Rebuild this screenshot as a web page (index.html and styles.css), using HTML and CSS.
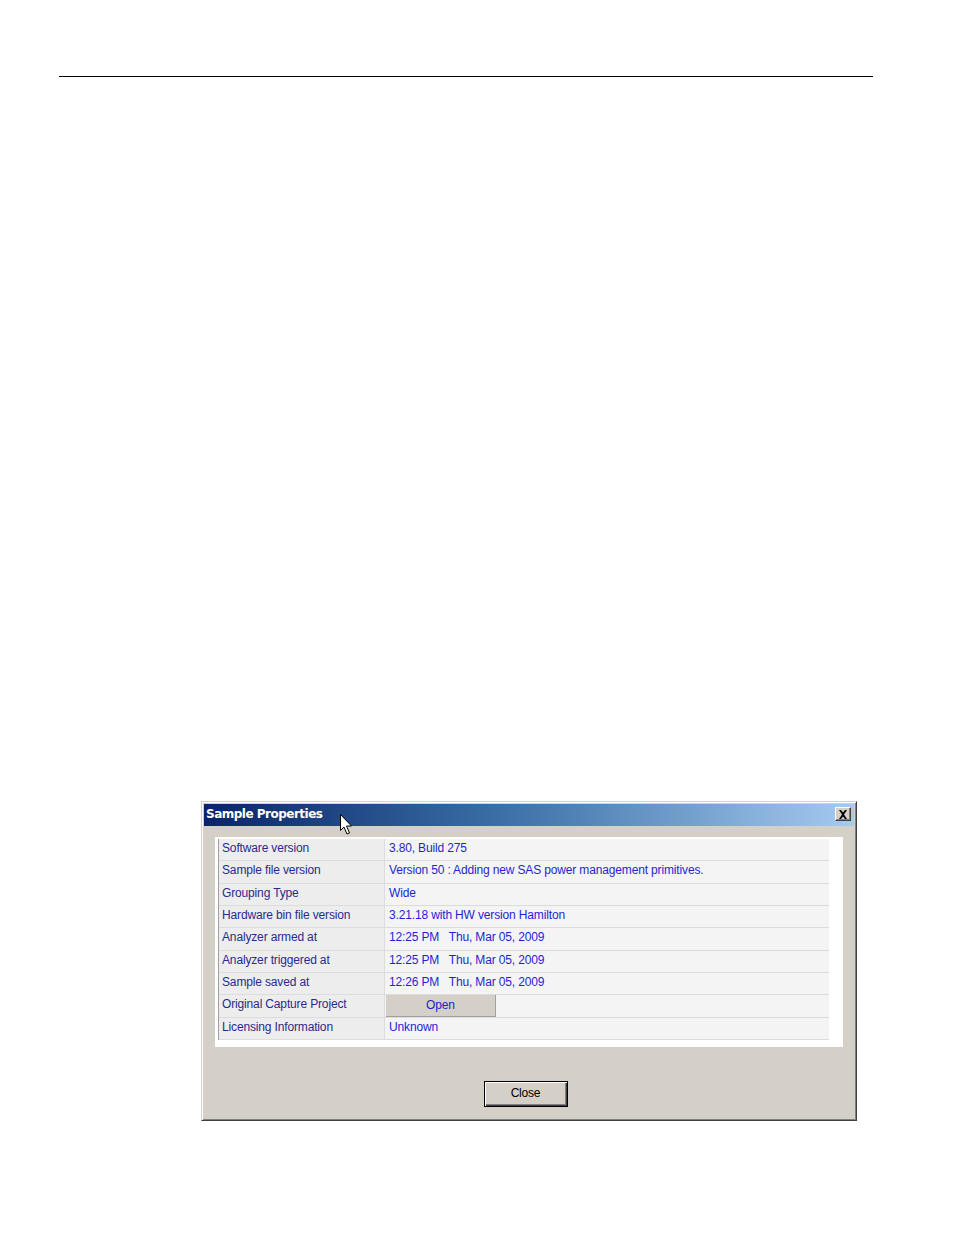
FILE: index.html
```html
<!DOCTYPE html>
<html>
<head>
<meta charset="utf-8">
<link rel="stylesheet" href="styles.css">
</head>
<body>
<div class="page">
  <div class="rule"></div>
  <div class="dialog">
    <div class="titlebar">
      <span class="title">Sample Properties</span>
      <span class="xbtn"><svg width="10" height="9" viewBox="0 0 10 9"><path d="M1 0h2l2 2.5L7 0h2L6 4.5 9 9H7L5 6.5 3 9H1l3-4.5z" fill="#000"/></svg></span>
    </div>
    <div class="panel">
      <div class="table">
        <div class="row"><div class="k">Software version</div><div class="v">3.80, Build 275</div></div>
        <div class="row"><div class="k">Sample file version</div><div class="v">Version 50 : Adding new SAS power management primitives.</div></div>
        <div class="row"><div class="k">Grouping Type</div><div class="v">Wide</div></div>
        <div class="row"><div class="k">Hardware bin file version</div><div class="v">3.21.18 with HW version Hamilton</div></div>
        <div class="row"><div class="k">Analyzer armed at</div><div class="v">12:25 PM&nbsp;&nbsp;&nbsp;Thu, Mar 05, 2009</div></div>
        <div class="row"><div class="k">Analyzer triggered at</div><div class="v">12:25 PM&nbsp;&nbsp;&nbsp;Thu, Mar 05, 2009</div></div>
        <div class="row"><div class="k">Sample saved at</div><div class="v">12:26 PM&nbsp;&nbsp;&nbsp;Thu, Mar 05, 2009</div></div>
        <div class="row"><div class="k">Original Capture Project</div><div class="v vbtn"><span class="open">Open</span></div></div>
        <div class="row"><div class="k">Licensing Information</div><div class="v">Unknown</div></div>
      </div>
    </div>
    <div class="footer"><span class="close">Close</span></div>
    <svg class="cursor" width="14" height="23" viewBox="0 0 14 23"><path d="M0.5 0.5v16l3.5-3.5 3 7 2.5-1-3-7h5z" fill="#fff" stroke="#000" stroke-width="1"/></svg>
  </div>
</div>
</body>
</html>
```
FILE: styles.css
```css
html, body { margin: 0; padding: 0; background: #fff; }
.page { width: 954px; height: 1235px; box-sizing: border-box; padding-top: 76px; position: relative; overflow: hidden; }
.rule { margin: 0 0 0 59px; width: 814px; height: 1px; background: #000; }
.dialog {
  position: relative;
  margin: 724px 0 0 201px;
  width: 656px; height: 320px;
  box-sizing: border-box;
  background: #d4d0c8;
  border-top: 1px solid #d4d0c8; border-left: 1px solid #d4d0c8;
  border-right: 1px solid #404040; border-bottom: 1px solid #404040;
  box-shadow: inset 1px 1px 0 #fff, inset -1px -1px 0 #808080;
  padding: 2px 2px 0 2px;
  font-family: "Liberation Sans", Arial, sans-serif;
}
.titlebar {
  height: 22px;
  background: linear-gradient(to right, #0a246a 0%, #3a6ea5 45%, #a6caf0 100%);
  display: flex; align-items: center; justify-content: space-between;
  padding: 0 3px 0 2px;
}
.title { color: #fff; font-weight: bold; font-size: 12px; font-family: "DejaVu Sans", Verdana, sans-serif; letter-spacing: -0.5px; margin-top: -2px; }
.xbtn {
  width: 16px; height: 14px; box-sizing: border-box;
  background: #d4d0c8;
  border-top: 1px solid #fff; border-left: 1px solid #fff;
  border-right: 1px solid #404040; border-bottom: 1px solid #404040;
  box-shadow: inset -1px -1px 0 #808080;
  display: flex; align-items: center; justify-content: center;
  margin-top: -2px;
}
.panel {
  margin: 11px 0 0 11px;
  width: 628px; height: 210px; box-sizing: border-box;
  background: #fff;
  padding: 2px 14px 0 3px;
}
.table { border-left: 1px solid #a0a0a0; }
.row { display: flex; height: 22.33px; box-sizing: border-box; border-bottom: 1px solid #dcdcdc; font-size: 12px; letter-spacing: -0.15px; }
.k { width: 162px; background: #ededed; color: #2a2a8e; padding: 0 0 3px 3px; display: flex; align-items: center; border-right: 1px solid #dcdcdc; }
.v { flex: 1; background: #f4f4f4; color: #1f1fd8; padding: 0 0 3px 4px; display: flex; align-items: center; white-space: nowrap; }
.vbtn { padding: 0 0 0 1px; align-items: stretch; }
.open {
  width: 110px; box-sizing: border-box; background: #d4d0c8; color: #2020d0;
  border-right: 1px solid #a0a0a0; border-bottom: 1px solid #a0a0a0;
  display: flex; align-items: center; justify-content: center;
  padding-bottom: 1px;
}
.footer { display: flex; justify-content: center; padding: 34px 0 0 0; margin-left: -7px; }
.close {
  width: 84px; height: 26px; box-sizing: border-box;
  border: 1px solid #000;
  box-shadow: inset 1px 1px 0 #fff, inset -1px -1px 0 #404040, inset -2px -2px 0 #808080;
  display: flex; align-items: center; justify-content: center;
  font-size: 12px; color: #000; letter-spacing: -0.2px;
  padding-bottom: 2px;
}
.cursor { position: absolute; left: 138px; top: 12px; }
```
